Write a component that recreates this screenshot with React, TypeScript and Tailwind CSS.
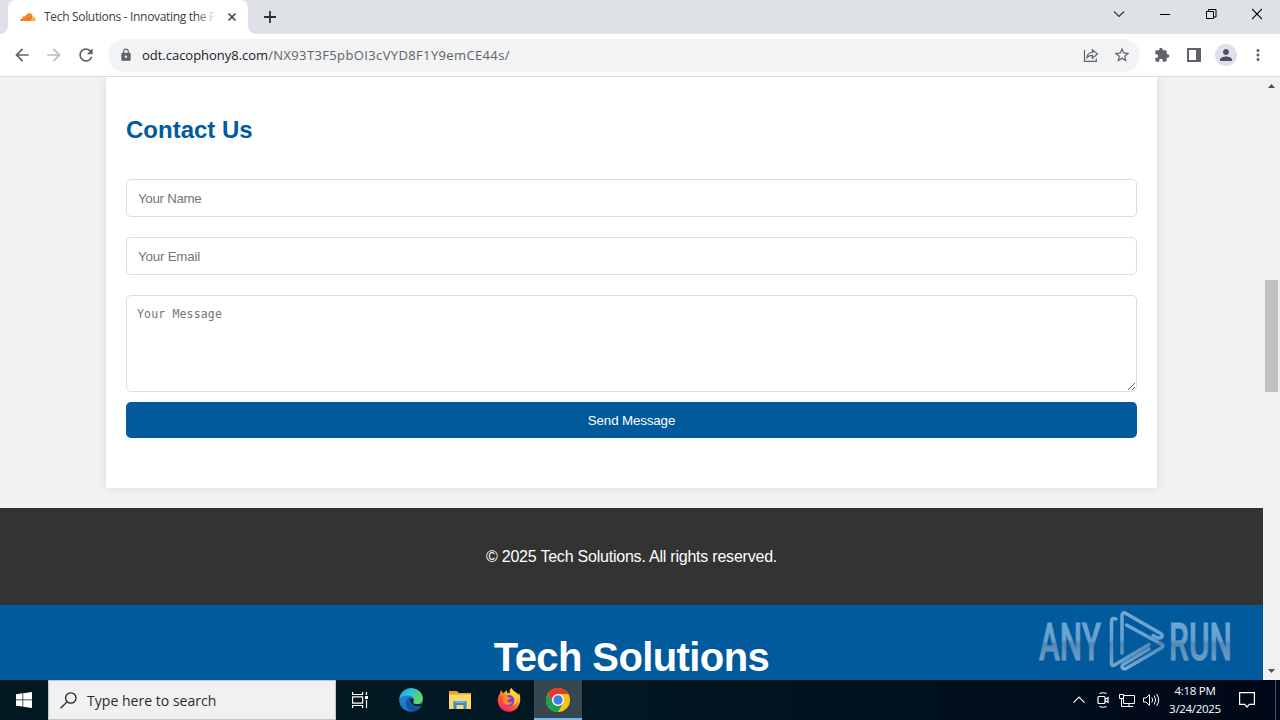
import type { ReactNode } from 'react';
import { MdArrowBack, MdArrowForward, MdRefresh, MdLock, MdStarBorder, MdExtension, MdPerson, MdMoreVert } from 'react-icons/md';

const TabStrip = () => (
  <div className="flex h-[34px] shrink-0 items-start bg-[#dee1e6]">
    <div className="relative ml-2 flex h-[34px] w-60 items-center rounded-t-lg bg-white pl-3">
      <svg className="absolute -left-2 bottom-0" width="8" height="8">
        <path d="M8 0v8H0a8 8 0 0 0 8-8z" fill="#fff" />
      </svg>
      <svg className="absolute -right-2 bottom-0" width="8" height="8">
        <path d="M0 0v8h8a8 8 0 0 1-8-8z" fill="#fff" />
      </svg>
      <svg width="16" height="16" viewBox="0 0 16 16" className="shrink-0">
        <path d="M.2 12c0-1.700 1-2.700 2.500-2.800C2.400 7.600 4.300 6.900 5.200 7.700 6 5.500 7.600 4.300 9.300 4.300c1.900 0 3.300 1.400 3.400 3.200L11.200 12z" fill="#f4801f" />
        <path d="M11.500 12l.8-2.100.2-2.300c2-.2 3.300 1.600 3.200 4.400z" fill="#fbae40" />
      </svg>
      <div className="relative ml-2 w-[172px] overflow-hidden whitespace-nowrap font-['Open_Sans',sans-serif] text-[12px] leading-4 tracking-[-0.32px] text-[#3c4043]">
        Tech Solutions - Innovating the F
        <div className="absolute inset-y-0 right-0 w-5 bg-gradient-to-r from-transparent to-white" />
      </div>
      <svg width="8" height="8" viewBox="0 0 8 8" className="ml-3">
        <path d="M.5.5l7 7M7.500.5l-7 7" stroke="#3c4043" strokeWidth="1.500" />
      </svg>
    </div>
    <svg width="12" height="12" viewBox="0 0 12 12" className="mt-[11px] ml-4">
      <path d="M6 0v12M0 6h12" stroke="#303236" strokeWidth="1.800" />
    </svg>
    <div className="mt-2 ml-auto mr-[18px] flex items-center gap-9">
      <svg width="12" height="12" viewBox="0 0 12 12" className="-mr-px">
        <path d="M1 3.500l5 5 5-5" stroke="#333" strokeWidth="1.200" fill="none" />
      </svg>
      <svg width="10" height="12" viewBox="0 0 10 12">
        <path d="M0 6.500h10" stroke="#000" />
      </svg>
      <svg width="11" height="12" viewBox="0 0 11 12" fill="none" stroke="#000">
        <path d="M.5 3.500h7v7h-7zM2.500 3.500v-2h7.500v7.500H8" />
      </svg>
      <svg width="10" height="12" viewBox="0 0 10 12" className="-ml-px">
        <path d="M0 1l10 10M10 1L0 11" stroke="#000" strokeWidth="1.100" />
      </svg>
    </div>
  </div>
);

const Toolbar = () => (
  <div className="flex h-[43px] shrink-0 items-center border-b border-[#dadce0] bg-white text-[#5f6368]">
    <MdArrowBack className="ml-3 size-5" />
    <MdArrowForward className="ml-3 size-5 text-[#babcbe]" />
    <MdRefresh className="ml-3 size-5" />
    <div className="ml-3 flex h-[33px] w-8 grow items-center rounded-full bg-[#f1f3f4] pl-[11px] pr-[9px]">
      <MdLock className="size-3.5" />
      <div className="ml-[9px] whitespace-nowrap font-['Open_Sans',sans-serif] text-[13px] leading-5">
        <span className="tracking-[-0.02px] text-[#202124]">odt.cacophony8.com</span>
        <span className="tracking-[0.37px]">/NX93T3F5pbOI3cVYD8F1Y9emCE44s/</span>
      </div>
      <svg width="16" height="16" viewBox="0 0 16 16" className="ml-auto" fill="none" stroke="#5f6368" strokeWidth="1.200">
        <path d="M1.500 3v11.400h11.800v-3" />
        <path d="M4 10.500c.3-3.400 2.300-5 5.400-5V2.700l5 4.200-5 4.200V8.400c-2.400 0-4 .5-5.400 2.100z" />
      </svg>
      <MdStarBorder className="ml-[14px] size-[18px]" />
    </div>
    <MdExtension className="ml-3.5 size-4" />
    <svg width="14" height="14" viewBox="0 0 14 14" className="ml-[17px]">
      <path fillRule="evenodd" d="M0 0h14v14H0zM2 2v10h7V2z" fill="#5f6368" />
    </svg>
    <div className="ml-3.5 flex size-[22px] items-center justify-center rounded-full bg-[#dfe1ea]">
      <MdPerson className="size-[18px] text-[#4d5165]" />
    </div>
    <MdMoreVert className="ml-3 mr-[13px] size-[18px]" />
  </div>
);

const fieldClass =
  'block w-full rounded-[5px] border border-[#ddd] bg-white p-2.5 leading-4 placeholder:text-[#757575] outline-none';

const Page = () => (
  <div className="flex h-[603px] w-[1263px] flex-col overflow-hidden bg-[#f2f2f2] font-['Liberation_Sans',Arial,sans-serif]">
    <section className="mx-auto h-[411px] w-[1051px] shrink-0 bg-white px-5 pt-[38px] shadow-[0_0_10px_rgba(0,0,0,0.1)]">
      <h2 className="text-2xl leading-[30px] font-bold text-[#005a9c]">Contact Us</h2>
      <form className="mt-[34px]">
        <input className={`${fieldClass} h-[38px] pl-[11px] text-[13.333px] tracking-[-0.3px]`} placeholder="Your Name" />
        <input className={`${fieldClass} mt-5 h-[38px] pl-[11px] text-[13.333px] tracking-[-0.2px]`} placeholder="Your Email" />
        <textarea
          className={`${fieldClass} mt-5 h-[97px] font-['DejaVu_Sans_Mono',monospace] text-[11.500px] tracking-[0.16px]`}
          placeholder="Your Message"
        />
        <button type="button" className="mt-2.5 block h-9 w-full rounded-[5px] bg-[#005a9c] pt-0.5 text-[13.333px] tracking-[-0.13px] text-white">
          Send Message
        </button>
      </form>
    </section>
    <footer className="mt-5 flex h-[97px] shrink-0 items-center justify-center bg-[#333] text-base tracking-[-0.22px] text-white">
      © 2025 Tech Solutions. All rights reserved.
    </footer>
    <header className="h-[75px] shrink-0 bg-[#005a9c] pt-[29px] text-center text-[40px] leading-[46px] font-bold tracking-[-0.6px] text-white">
      Tech Solutions
    </header>
  </div>
);

const Scrollbar = () => (
  <div className="flex w-[17px] flex-col items-center bg-[#f1f1f1]">
    <svg width="7" height="4" className="mt-[7px]">
      <path d="M0 4l3.500-4L7 4z" fill="#505050" />
    </svg>
    <div className="mt-48 h-28 w-[13px] bg-[#c1c1c1]" />
    <svg width="7" height="4" className="mt-auto mb-[7px]">
      <path d="M0 0l3.500 4L7 0z" fill="#505050" />
    </svg>
  </div>
);

const Watermark = () => (
  <svg width="204" height="70" viewBox="0 0 204 70" className="absolute top-[530px] left-[1037px]">
    <defs>
      <linearGradient id="steel" gradientUnits="userSpaceOnUse" x1="0" y1="4" x2="0" y2="62">
        <stop offset="0" stopColor="#71a8d8" />
        <stop offset=".5" stopColor="#68a1d0" />
        <stop offset=".56" stopColor="#5588b5" />
        <stop offset="1" stopColor="#78a9d4" />
      </linearGradient>
    </defs>
    <g fill="url(#steel)" stroke="url(#steel)" strokeWidth="0.800" fontFamily="Roboto, sans-serif" fontSize="52" fontWeight="500">
      <text x="2" y="53" textLength="62" lengthAdjust="spacingAndGlyphs">ANY</text>
      <text x="132" y="53" textLength="63" lengthAdjust="spacingAndGlyphs">RUN</text>
    </g>
    <g fill="none" stroke="url(#steel)" strokeWidth="3.500" strokeLinejoin="round" strokeLinecap="round">
      <path d="M79 12q-4.500-2-4.500 3v41q0 3.500 3 2L112 37.500" />
      <path d="M85 46V8.500q0-4 4-2L124.500 27q2.500 4-3.500 4l-5-2.500" />
      <path d="M89.500 18L125 37.500q2 1.500 0 3L89 61.500q-3.500 1-4-1.500 0-2 2-3L112 42" />
    </g>
  </svg>
);

const EdgeIcon = () => (
  <svg width="24" height="24" viewBox="0 0 24 24">
    <defs>
      <linearGradient id="edge-wave" x1="0" y1="0" x2="1" y2=".5">
        <stop stopColor="#239ce0" />
        <stop offset=".5" stopColor="#32c5d4" />
        <stop offset="1" stopColor="#65d85a" />
      </linearGradient>
      <linearGradient id="edge-body" x1="0" y1="0" x2=".4" y2="1">
        <stop stopColor="#1b8edb" />
        <stop offset="1" stopColor="#1c70c3" />
      </linearGradient>
    </defs>
    <circle cx="12" cy="12" r="11.800" fill="url(#edge-body)" />
    <path d="M.3 11C1.300 4.500 6.200.2 12.200.2c6.700 0 11.600 4.800 11.600 10 0 3.700-2.700 5.800-6 5.800-3.200 0-4.300-1.200-3.500-2.200 1.800-2.600-.5-5.800-4.600-6.300C5.500 7 2.200 8.500.3 11z" fill="url(#edge-wave)" />
    <path d="M9.500 9.800c-5.500 4.700-2 13.700 5.500 13.600 3.500-.5 6.500-3 7.400-5.500-2.200 1.500-7 1.300-9.300-.8-2.500-2.200-3.200-5-.6-7.300z" fill="#1554a5" />
    <path d="M12.200 10c2.500.4 3.200 2.300 2 4-.8 1.200 1 2.500 5 2.300 1.200 0 2.300-.5 3.200-.9.500 0 .4 1.200-.1 2-2 1.500-7 1-9.200-1.200-2-2-2.500-4.200-.9-6.200z" fill="#081e29" />
  </svg>
);

const FolderIcon = () => (
  <svg width="22" height="20" viewBox="0 0 22 20">
    <path d="M0 1h8l2 2h12v16H0z" fill="#e5a52f" />
    <path d="M0 4.500h22V19H0z" fill="#ffd96a" />
    <path d="M4.500 11h13v8h-3v-4h-7v4h-3z" fill="#328ad0" />
    <path d="M6 11h10v2H6z" fill="#62b4e9" />
  </svg>
);

const FirefoxIcon = () => (
  <svg width="24" height="24" viewBox="0 0 24 24">
    <defs>
      <linearGradient id="fox" x1=".85" y1="0" x2=".2" y2="1">
        <stop stopColor="#fff04b" />
        <stop offset=".35" stopColor="#ffae27" />
        <stop offset=".65" stopColor="#ff5034" />
        <stop offset="1" stopColor="#e91e76" />
      </linearGradient>
    </defs>
    <path d="M3 5.500L3.800 2l2.400 3.200C7.600 4.700 8.500 3 10 2.300L10.300 5 13 5C12 2.700 13 1 14.800 0c.6 3 5 4 6.500 6.500l.8-1.300c3.300 7.800-.5 18.500-10.300 18.600C2.500 23.700-2.500 13.500 3 5.500z" fill="url(#fox)" />
    <circle cx="12" cy="12.600" r="5.600" fill="#8640c7" />
    <path d="M6.700 8c2-.8 4 0 4.700 1.200 1.200.2 2.300.2 2.300.8-.4 1-2.700 1.200-3.300 2.200-.2 2.100 2.600 3 5 1.300-1 4.400-7.300 4.500-9.200.7-.8-2.500-.7-4.200.5-6.200z" fill="#ff8a2b" />
    <path d="M14.300 6.500c4.200 2.700 4.100 8.300 1.200 11 5.300-2 6.500-8.300 2.500-12.300-1.500-1.800-2.700-2.300-3.300-4.200-1.300 1.800-1.500 3.800-.4 5.500z" fill="#ffd333" />
  </svg>
);

const ChromeIcon = () => (
  <svg width="24" height="24" viewBox="0 0 24 24">
    <circle cx="12" cy="12" r="12" fill="#fbc116" />
    <path d="M1.600 6a12 12 0 0 1 20.800 0H12L7 15z" fill="#e33b2e" />
    <path d="M1.600 6A12 12 0 0 0 12 24l5.200-9-5.200 3-5.200-3z" fill="#1da154" />
    <circle cx="12" cy="12" r="6" fill="#fff" />
    <circle cx="12" cy="12" r="4.700" fill="#3f7ee8" />
  </svg>
);

const TaskButton = ({ active, children }: { active?: boolean; children: ReactNode }) => (
  <div
    className={`flex h-10 items-center justify-center ${active ? 'ml-px w-12 border-b-2 border-[#76b9ed] bg-[#37474f] pt-0.5' : 'w-[49px]'}`}
  >
    {children}
  </div>
);

const Taskbar = () => (
  <div className="flex h-10 shrink-0 items-center bg-gradient-to-r from-[#011821] via-[#011721] to-[#010818] text-white">
    <div className="flex w-12 justify-center">
      <svg width="16" height="16" viewBox="0 0 16 16" fill="#fff">
        <path d="M0 2.200l6.500-.9v6.200H0zM7.200 1.200L16 0v7.500H7.200zM0 8.300h6.500v6.300L0 13.700zM7.200 8.300H16V16l-8.800-1.300z" />
      </svg>
    </div>
    <div className="flex h-10 w-72 items-center border border-[#c3c7c9] bg-[#f1f1f1] pl-[11px] text-[#2b2b2b]">
      <svg width="17" height="17" viewBox="0 0 17 17" fill="none" stroke="#222" strokeWidth="1.300">
        <circle cx="10.800" cy="6" r="5.200" />
        <path d="M7 9.900L.6 16.300" />
      </svg>
      <span className="ml-2.5 font-['Open_Sans',sans-serif] text-[14px] tracking-[0.03px]">Type here to search</span>
    </div>
    <TaskButton>
      <svg width="17" height="16" viewBox="0 0 17 16" fill="none" stroke="#fff" strokeWidth="1.200">
        <path d="M.6 0v2.500h10V0M.6 16v-2.500h10V16M.6 4.800h10v6.400H.6zM14.500 0v3M14.500 8v8" />
        <path d="M13 4h3v3h-3z" fill="#fff" stroke="none" />
      </svg>
    </TaskButton>
    <div className="flex pl-px">
      <TaskButton><EdgeIcon /></TaskButton>
      <TaskButton><FolderIcon /></TaskButton>
      <TaskButton><FirefoxIcon /></TaskButton>
      <TaskButton active><ChromeIcon /></TaskButton>
    </div>
    <div className="ml-auto flex h-10 items-center">
      <svg width="12" height="8" viewBox="0 0 12 8" fill="none" stroke="#fff" strokeWidth="1.200">
        <path d="M.5 6.700L6 1.200l5.500 5.500" />
      </svg>
      <svg width="12" height="16" viewBox="0 0 12 16" fill="none" stroke="#fff" className="ml-3">
        <path d="M2.500 1.500q3.500-1.500 7 0M2.500 14.500q3.500 1.500 7 0M1 5.500q0-1 1-1h5q1 0 1 1v5q0 1-1 1H2q-1 0-1-1zM8 7.500l3-2v5l-3-2" strokeWidth="1.200" />
      </svg>
      <svg width="16" height="15" viewBox="0 0 16 15" fill="none" stroke="#fff" className="ml-2.5">
        <path d="M5 2.500h10.500v8H4.500v-5M6 13.500h8M10 10.500v3M.5 1.500h4v4h-4zM2.500 5.500v8H6" />
      </svg>
      <svg width="17" height="14" viewBox="0 0 17 14" fill="none" stroke="#fff" className="ml-2">
        <path d="M.5 5h2.500l3.500-3.500v11L3 9H.5zM8.800 4.500q1.700 2.500 0 5M11.200 2.700q3 4.300 0 8.600M13.500 1q4.500 6 0 12" />
      </svg>
      <div className="ml-[7px] w-14 text-center font-['Open_Sans',sans-serif] text-[11.500px] leading-[18px] tracking-[-0.3px] whitespace-nowrap">
        <div>4:18 PM</div>
        <div>3/24/2025</div>
      </div>
      <svg width="16" height="16" viewBox="0 0 16 16" fill="none" stroke="#fff" strokeWidth="1.200" className="ml-4">
        <path d="M.6.6h14.800v11.800h-5L8 15l-2.400-2.600h-5z" />
      </svg>
      <div className="ml-5 h-10 w-[5px] border-l border-[#4d5661]" />
    </div>
  </div>
);

const App = () => {
  return (
    <div className="flex h-[720px] w-[1280px] flex-col overflow-hidden">
      <TabStrip />
      <Toolbar />
      <main className="relative flex h-[603px] shrink-0">
        <Page />
        <Scrollbar />
        <Watermark />
      </main>
      <Taskbar />
    </div>
  );
};

export default App;
